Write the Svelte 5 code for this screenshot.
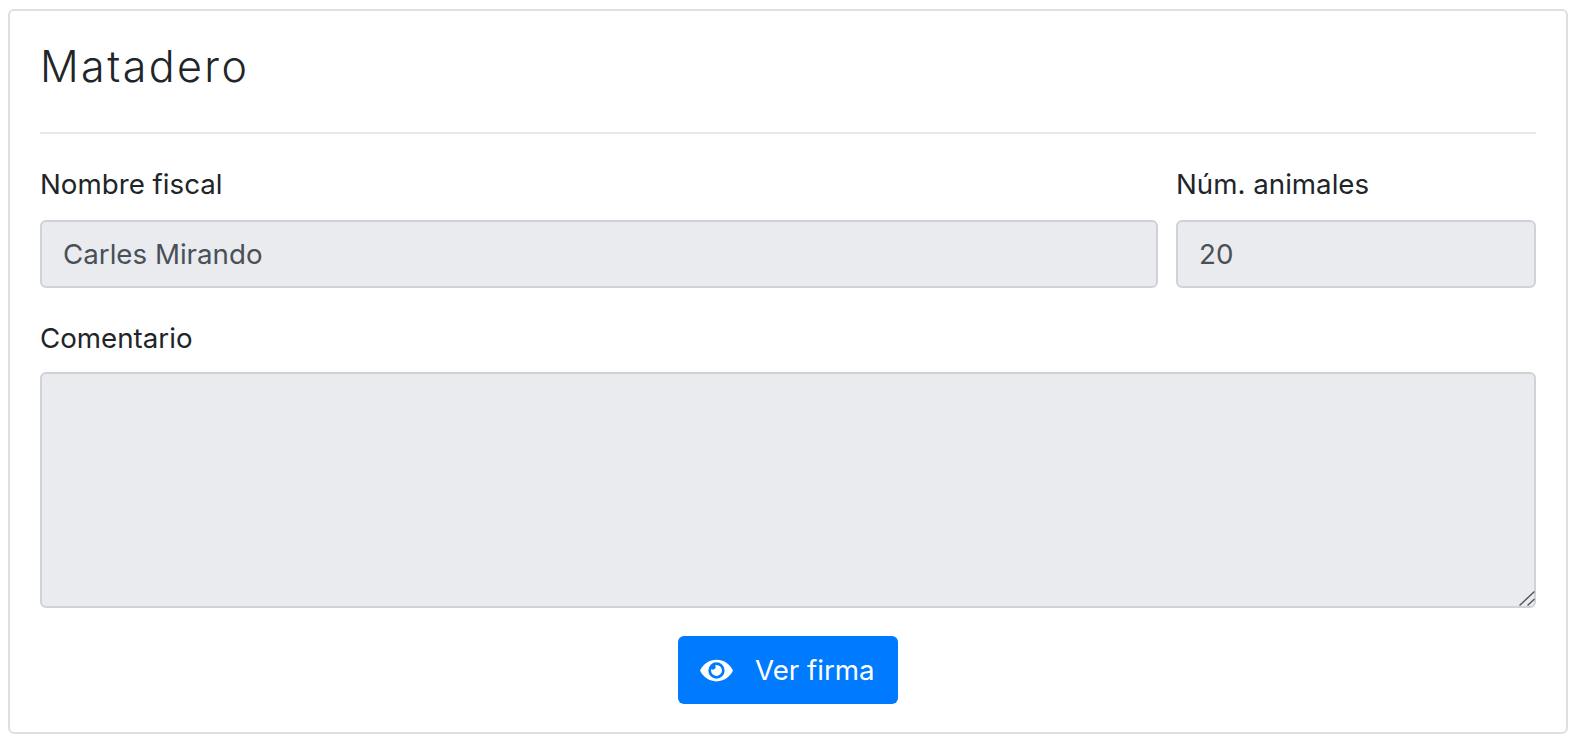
<script>
	let nombre = 'Carles Mirando';
	let animales = '20';
	let comentario = '';
</script>

<div class="page">
	<section class="card">
		<h2>Matadero</h2>
		<hr />
		<div class="row">
			<div class="field">
				<label for="nombre">Nombre fiscal</label>
				<input id="nombre" type="text" value={nombre} disabled />
			</div>
			<div class="field">
				<label for="animales">Núm. animales</label>
				<input id="animales" type="text" value={animales} disabled />
			</div>
		</div>
		<div class="field comment">
			<label for="comentario">Comentario</label>
			<div class="area">
				<textarea id="comentario" value={comentario} disabled></textarea>
				
				<svg class="grip" viewBox="0 0 16 15" width="16" height="15" aria-hidden="true">
					<path d="M0.5 14.5 15.5 0.5M8.5 14.5 15.5 8" fill="none" stroke="#555" stroke-width="1.4"/>
				</svg>
			</div>
		</div>
		<div class="actions">
			<button type="button">
				<svg viewBox="0 0 576 512" width="33" height="29" aria-hidden="true">
					<path fill="currentColor" d="M572.52 241.4C518.29 135.59 410.93 64 288 64S57.68 135.64 3.48 241.41a32.35 32.35 0 0 0 0 29.19C57.71 376.41 165.07 448 288 448s230.32-71.64 284.52-177.41a32.35 32.35 0 0 0 0-29.19zM288 400a144 144 0 1 1 144-144 143.93 143.93 0 0 1-144 144zm0-240a95.31 95.31 0 0 0-25.31 3.79 47.85 47.85 0 0 1-66.9 66.9A95.78 95.78 0 1 0 288 160z"/>
				</svg>
				<span>Ver firma</span>
			</button>
		</div>
	</section>
</div>

<style>
	:global(body) {
		margin: 0;
		background: #fff;
	}

	.page {
		padding: 9px 14px 0 8px;
		font-family: Inter, "Liberation Sans", sans-serif;
		color: #212529;
	}

	.card {
		box-sizing: border-box;
		height: 725px;
		padding: 30px 30px 0;
		border: 2px solid #dfdfdf;
		border-radius: 6px;
		background: #fff;
	}

	h2 {
		margin: 0;
		height: 91px;
		font-size: 43px;
		line-height: 50px;
		font-weight: 300;
		letter-spacing: 2.4px;
	}

	hr {
		margin: 0;
		border: 0;
		border-top: 2px solid #e6e8ea;
	}

	.row {
		display: grid;
		grid-template-columns: 1118px 360px;
		gap: 18px;
		margin-top: 32px;
	}

	label {
		display: block;
		font-size: 27.7px;
		line-height: 36px;
		margin-bottom: 18px;
	}

	input,
	textarea {
		display: block;
		box-sizing: border-box;
		width: 100%;
		border: 2px solid #cfd3d8;
		border-radius: 6px;
		background: #e9ebef;
		color: #495057;
		font: inherit;
		font-size: 27.7px;
		opacity: 1;
		outline: 0;
	}

	input {
		height: 68px;
		padding: 0 21px;
	}

	textarea {
		height: 236px;
		padding: 12px 21px;
		resize: none;
	}

	.comment {
		margin-top: 32px;
	}

	.comment label {
		margin-bottom: 16px;
	}

	.area {
		position: relative;
	}

	.grip {
		position: absolute;
		right: 1px;
		bottom: 2px;
	}

	.actions {
		display: flex;
		justify-content: center;
		margin-top: 28px;
	}

	button {
		display: flex;
		align-items: center;
		gap: 22px;
		box-sizing: border-box;
		width: 220px;
		height: 68px;
		padding: 0 22px;
		border: 0;
		border-radius: 6px;
		background: #007bff;
		color: #fff;
		font: inherit;
		font-size: 27.7px;
	}
</style>
